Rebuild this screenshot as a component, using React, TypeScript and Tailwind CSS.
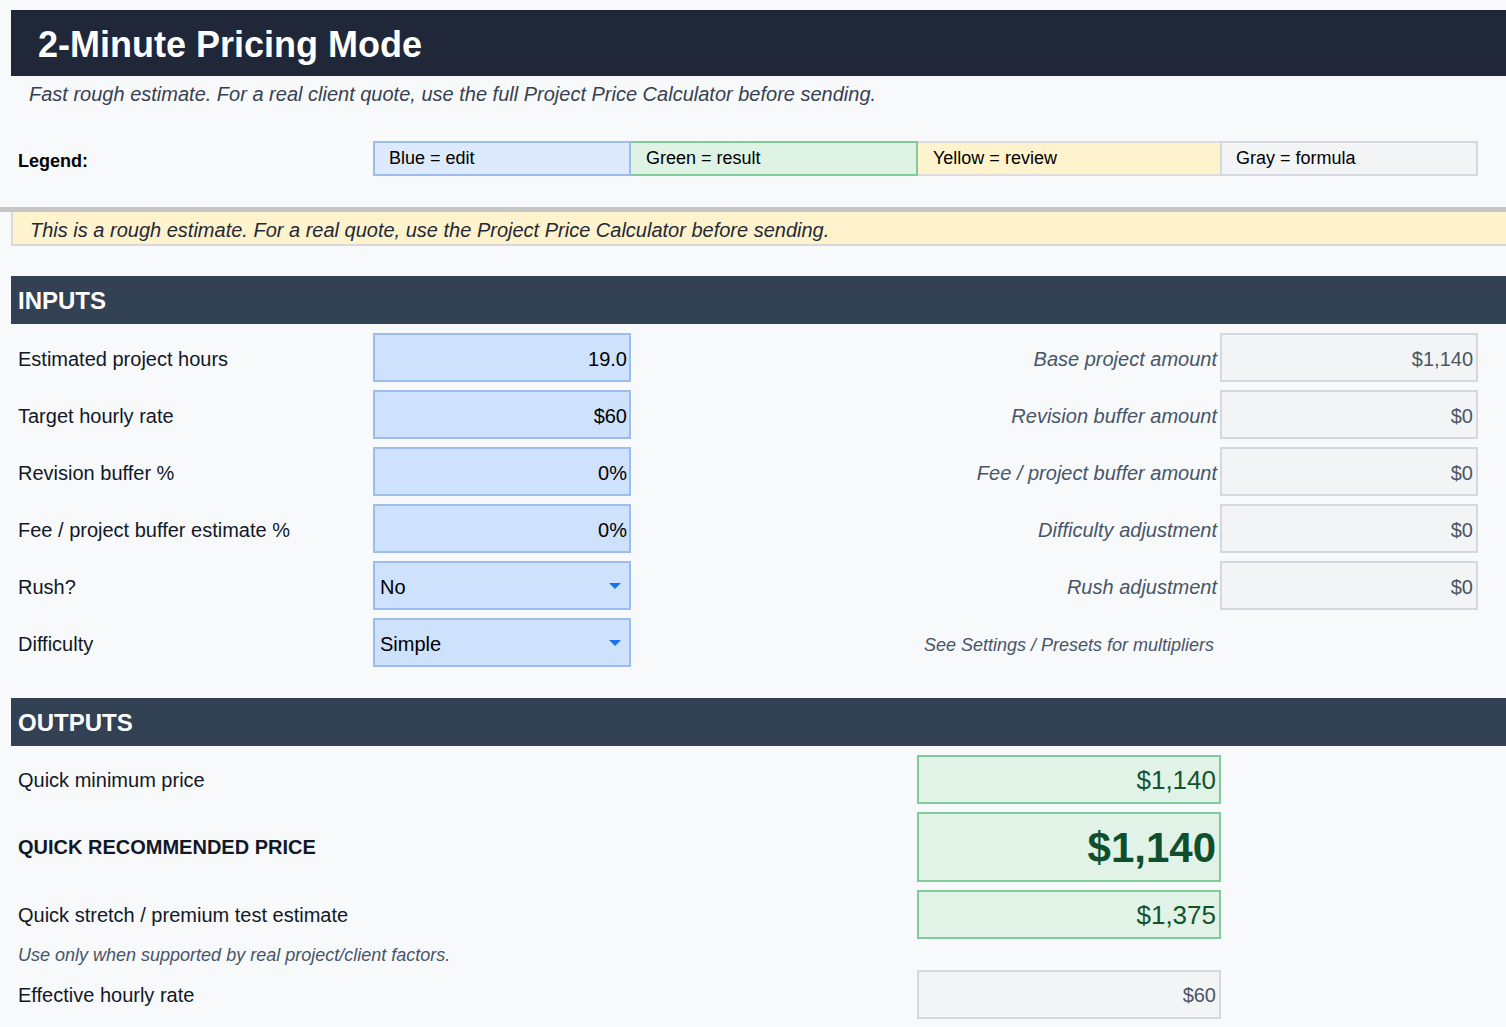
import React from "react";

const COLS = "grid grid-cols-[362px_258px_287px_302px_258px_1fr]";

function Caret() {
  return (
    <svg width="12" height="7" viewBox="0 0 12 7" className="shrink-0">
      <path d="M0 0 L12 0 L6 6 Z" fill="#1a73e8" />
    </svg>
  );
}

function BlueBox({ value, select }: { value: string; select?: boolean }) {
  return (
    <div
      className={`h-[49px] bg-[#cfe2fd] border-2 border-[#9dbcee] flex items-center text-[20px] text-black pt-[2px] ${
        select ? "justify-between pl-[5px] pr-[8px]" : "justify-end pr-[2px]"
      }`}
    >
      <span>{value}</span>
      {select && <Caret />}
    </div>
  );
}

function GrayBox({ value }: { value: string }) {
  return (
    <div className="h-[49px] bg-[#f3f4f6] border-2 border-[#d5d8de] flex items-center justify-end pr-[3px] pt-[2px] text-[20px] text-[#4b5563]">
      {value}
    </div>
  );
}

function InputRow({
  label,
  value,
  select,
  right,
  rightValue,
  note,
}: {
  label: string;
  value: string;
  select?: boolean;
  right?: string;
  rightValue?: string;
  note?: string;
}) {
  return (
    <div className={`${COLS} h-[49px] items-center`}>
      <div className="pl-[7px] pt-[2px] text-[20px] text-[#111827]">{label}</div>
      <BlueBox value={value} select={select} />
      <div />
      <div className="text-right pr-[3px] pt-[2px] italic text-[20px] text-[#475569]">
        {right}
        {note && <span className="text-[18px] pr-[3px]">{note}</span>}
      </div>
      <div>{rightValue !== undefined && <GrayBox value={rightValue} />}</div>
      <div />
    </div>
  );
}

export default function App() {
  return (
    <div
      className="w-[1506px] h-[1027px] overflow-hidden bg-[#f8f9fb] pt-[10px]"
      style={{ fontFamily: '"Liberation Sans", Arial, sans-serif' }}
    >
      <div className="ml-[11px]">
        {/* Title */}
        <div className="h-[66px] bg-[#1f2738] flex items-center pl-[27px] pt-[3px]">
          <h1 className="text-[36px] font-bold text-white leading-none">2-Minute Pricing Mode</h1>
        </div>
        <div className="h-[36px] flex items-center pl-[18px] italic text-[20px] text-[#374151]">
          Fast rough estimate. For a real client quote, use the full Project Price Calculator before sending.
        </div>

        {/* Legend */}
        <div className={`${COLS} mt-[29px] h-[35px] text-[18px] text-black`}>
          <div className="pl-[7px] font-bold flex items-center pt-[6px]">Legend:</div>
          <div className="bg-[#dde9fc] border-2 border-[#9dbcee] flex items-center pl-[14px]">Blue = edit</div>
          <div className="bg-[#dff3e5] border-2 border-[#7fcb9b] border-l-0 flex items-center pl-[15px]">Green = result</div>
          <div className="bg-[#fff3cd] border-y-2 border-[#dcdcdc] flex items-center pl-[15px]">Yellow = review</div>
          <div className="bg-[#f3f4f6] border-2 border-[#d5d8de] flex items-center pl-[14px]">Gray = formula</div>
          <div />
        </div>
      </div>

      {/* Frozen divider */}
      <div className="mt-[31px] h-[5px] bg-[#c6c6c6]" />

      <div className="ml-[11px]">
        <div className="h-[34px] bg-[#fff3cd] border-b-2 border-l-2 border-[#d9d9d9] flex items-center pl-[17px] pt-[3px] italic text-[20px] text-[#1f2937]">
          This is a rough estimate. For a real quote, use the Project Price Calculator before sending.
        </div>

        {/* INPUTS */}
        <div className="mt-[30px] h-[48px] bg-[#334155] flex items-center pl-[7px] pt-[2px]">
          <span className="text-[24px] font-bold text-white">INPUTS</span>
        </div>
        <div className="pt-[9px] flex flex-col gap-[8px]">
          <InputRow label="Estimated project hours" value="19.0" right="Base project amount" rightValue="$1,140" />
          <InputRow label="Target hourly rate" value="$60" right="Revision buffer amount" rightValue="$0" />
          <InputRow label="Revision buffer %" value="0%" right="Fee / project buffer amount" rightValue="$0" />
          <InputRow label="Fee / project buffer estimate %" value="0%" right="Difficulty adjustment" rightValue="$0" />
          <InputRow label="Rush?" value="No" select right="Rush adjustment" rightValue="$0" />
          <InputRow label="Difficulty" value="Simple" select note="See Settings / Presets for multipliers" />
        </div>

        {/* OUTPUTS */}
        <div className="mt-[31px] h-[48px] bg-[#334155] flex items-center pl-[7px] pt-[2px]">
          <span className="text-[24px] font-bold text-white">OUTPUTS</span>
        </div>
        <div className="pt-[9px] flex flex-col">
          <div className={`${COLS} h-[49px] items-center`}>
            <div className="col-span-3 pl-[7px] text-[20px] text-[#111827]">Quick minimum price</div>
            <div className="h-[49px] -ml-[1px] mr-[-1px] bg-[#e0f3e6] border-2 border-[#7fcb9b] flex items-center justify-end pr-[3px] pt-[2px] text-[26px] text-[#14532d]">
              $1,140
            </div>
          </div>
          <div className={`${COLS} h-[70px] mt-[8px] items-center`}>
            <div className="col-span-3 pl-[7px] text-[20px] font-bold text-[#111827]">QUICK RECOMMENDED PRICE</div>
            <div className="h-[70px] -ml-[1px] mr-[-1px] bg-[#e0f3e6] border-2 border-[#7fcb9b] flex items-center justify-end pr-[3px] text-[42px] font-bold text-[#0f4f2e]">
              $1,140
            </div>
          </div>
          <div className={`${COLS} h-[49px] mt-[8px] items-center`}>
            <div className="col-span-3 pl-[7px] text-[20px] text-[#111827]">Quick stretch / premium test estimate</div>
            <div className="h-[49px] -ml-[1px] mr-[-1px] bg-[#e0f3e6] border-2 border-[#7fcb9b] flex items-center justify-end pr-[3px] pt-[2px] text-[26px] text-[#14532d]">
              $1,375
            </div>
          </div>
          <div className="h-[31px] flex items-center pl-[7px] pt-[2px] italic text-[18px] text-[#475569]">
            Use only when supported by real project/client factors.
          </div>
          <div className={`${COLS} h-[49px] items-center`}>
            <div className="col-span-3 pl-[7px] text-[20px] text-[#111827]">Effective hourly rate</div>
            <div className="h-[49px] -ml-[1px] mr-[-1px] bg-[#f3f4f6] border-2 border-[#d5d8de] flex items-center justify-end pr-[3px] text-[20px] text-[#4b5563]">
              $60
            </div>
          </div>
        </div>
      </div>
    </div>
  );
}
